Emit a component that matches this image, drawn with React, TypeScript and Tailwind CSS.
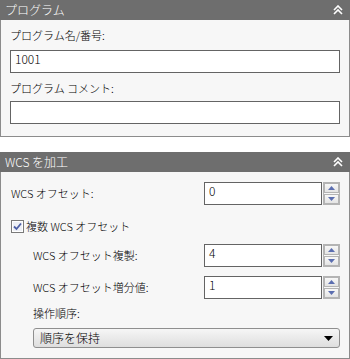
import React from 'react';

const font = { fontFamily: '"Noto Sans CJK JP", "Liberation Sans", sans-serif' };

// 折りたたみアイコン
const Collapse = () => (
  <svg width="10" height="10" viewBox="0 0 10 10" className="mr-[7px]">
    <path d="M1 5 L5 1 L9 5" stroke="#fff" strokeWidth="1.6" fill="none" />
    <path d="M1 9 L5 5 L9 9" stroke="#fff" strokeWidth="1.6" fill="none" />
  </svg>
);

const Header = ({ title }: { title: string }) => (
  <div className="flex h-[20px] items-center justify-between bg-[#6e6e6e] pl-[5px] text-[12px] font-light text-white">
    <span>{title}</span>
    <Collapse />
  </div>
);

const Arrow = ({ up }: { up?: boolean }) => (
  <button className="flex h-[10px] w-[15px] items-center justify-center border border-[#b4b4b4] bg-gradient-to-b from-[#f8f8f8] to-[#e4e4e4]">
    <svg width="7" height="4" viewBox="0 0 7 4">
      {up ? <path d="M0 4 L3.5 0 L7 4 Z" fill="#5b6eb0" /> : <path d="M0 0 L3.5 4 L7 0 Z" fill="#5b6eb0" />}
    </svg>
  </button>
);

const Spin = ({ value }: { value: string }) => (
  <div className="flex">
    <div className="h-[23px] w-[118px] border border-[#646464] bg-white pl-[4px] text-[12px] leading-[16px]">{value}</div>
    <div className="ml-[1px] flex h-[23px] flex-col justify-center gap-[1px] border border-[#b4b4b4]">
      <Arrow up />
      <Arrow />
    </div>
  </div>
);

export default function App() {
  return (
    <div className="w-[350px] bg-white text-[11px] font-light text-black" style={font}>
      {/* プログラム */}
      <div>
        <Header title="プログラム" />
        <div className="border-x border-b border-[#8c8c8c] bg-[#f7f7f7] px-[9px] pb-[12px]">
          <div className="pt-[7px] leading-[16px]">プログラム名/番号:</div>
          <div className="mt-[7px] h-[23px] border border-[#646464] bg-white pl-[4px] text-[12px] leading-[16px]">1001</div>
          <div className="mt-[7px] leading-[16px]">プログラム コメント:</div>
          <div className="mt-[5px] h-[23px] border border-[#646464] bg-white"></div>
        </div>
      </div>

      {/* WCS を加工 */}
      <div className="mt-[15px]">
        <Header title="WCS を加工" />
        <div className="border-x border-b border-[#8c8c8c] bg-[#f7f7f7] pb-[10px] pl-[10px] pr-[9px]">
          <div className="flex items-center justify-between pt-[10px]">
            <span>WCS オフセット:</span>
            <Spin value="0" />
          </div>
          <div className="mt-[14px] flex items-center gap-[2px] leading-[14px]">
            <svg width="13" height="13" viewBox="0 0 13 13">
              <rect x="0.5" y="0.5" width="12" height="12" fill="#fff" stroke="#7a7a7a" />
              <rect x="2" y="2" width="9" height="9" fill="#eef0f6" />
              <path d="M3 6.5 L5.5 9 L10 3.5" stroke="#4d5fa6" strokeWidth="1.8" fill="none" />
            </svg>
            <span>複数 WCS オフセット</span>
          </div>
          <div className="pl-[22px]">
            <div className="mt-[11px] flex items-center justify-between">
              <span>WCS オフセット複製:</span>
              <Spin value="4" />
            </div>
            <div className="mt-[9px] flex items-center justify-between">
              <span>WCS オフセット増分値:</span>
              <Spin value="1" />
            </div>
            <div className="mt-[6px] leading-[16px]">操作順序:</div>
            <div className="mt-[7px] flex h-[20px] items-center justify-between rounded-[3px] border border-[#8f8f8f] bg-gradient-to-b from-[#f6f6f6] to-[#dedede] pl-[6px] pr-[6px] text-[12px]">
              <span>順序を保持</span>
              <svg width="9" height="5" viewBox="0 0 9 5">
                <path d="M0 0 L4.5 5 L9 0 Z" fill="#000" />
              </svg>
            </div>
          </div>
        </div>
      </div>
    </div>
  );
}
